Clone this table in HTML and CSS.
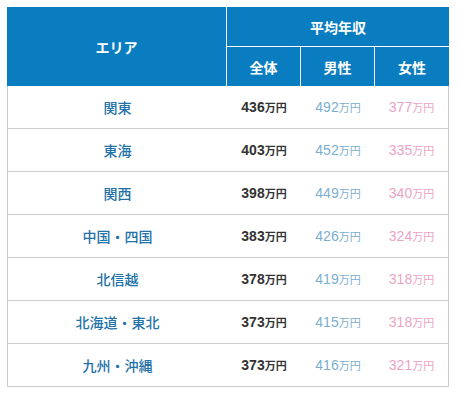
FILE: index.html
```html
<!DOCTYPE html>
<html lang="ja">
<head>
<meta charset="utf-8">
<link rel="stylesheet" href="styles.css">
</head>
<body>
<table class="salary">
  <thead>
    <tr class="head-top">
      <th class="area-head" rowspan="2">エリア</th>
      <th class="group-head" colspan="3">平均年収</th>
    </tr>
    <tr class="head-sub">
      <th class="sub">全体</th>
      <th class="sub">男性</th>
      <th class="sub last">女性</th>
    </tr>
  </thead>
  <tbody>
    <tr><td class="area">関東</td><td class="all">436<span class="unit">万円</span></td><td class="male">492<span class="unit">万円</span></td><td class="female">377<span class="unit">万円</span></td></tr>
    <tr><td class="area">東海</td><td class="all">403<span class="unit">万円</span></td><td class="male">452<span class="unit">万円</span></td><td class="female">335<span class="unit">万円</span></td></tr>
    <tr><td class="area">関西</td><td class="all">398<span class="unit">万円</span></td><td class="male">449<span class="unit">万円</span></td><td class="female">340<span class="unit">万円</span></td></tr>
    <tr><td class="area">中国・四国</td><td class="all">383<span class="unit">万円</span></td><td class="male">426<span class="unit">万円</span></td><td class="female">324<span class="unit">万円</span></td></tr>
    <tr><td class="area">北信越</td><td class="all">378<span class="unit">万円</span></td><td class="male">419<span class="unit">万円</span></td><td class="female">318<span class="unit">万円</span></td></tr>
    <tr><td class="area">北海道・東北</td><td class="all">373<span class="unit">万円</span></td><td class="male">415<span class="unit">万円</span></td><td class="female">318<span class="unit">万円</span></td></tr>
    <tr><td class="area">九州・沖縄</td><td class="all">373<span class="unit">万円</span></td><td class="male">416<span class="unit">万円</span></td><td class="female">321<span class="unit">万円</span></td></tr>
  </tbody>
</table>
</body>
</html>
```

FILE: styles.css
```css
html, body {
  margin: 0;
  padding: 0;
  background: #ffffff;
}
body {
  padding: 7px;
  font-family: "Liberation Sans", "Noto Sans CJK JP", sans-serif;
}
.salary {
  width: 442px;
  border-collapse: separate;
  border-spacing: 0;
  table-layout: fixed;
}
.salary th {
  background: #0a7dc1;
  color: #ffffff;
  font-family: "Noto Sans CJK JP", sans-serif;
  font-weight: 700;
  font-size: 14px;
  text-align: center;
  padding: 0;
  line-height: 1;
}
.area-head {
  width: 220px;
  border-right: 1px solid #ffffff;
  box-sizing: border-box;
}
.head-top th.group-head {
  height: 40px;
  border-bottom: 1px solid #ffffff;
  box-sizing: border-box;
}
.head-sub th {
  height: 39px;
  box-sizing: border-box;
}
.head-sub th.sub {
  border-right: 1px solid #ffffff;
}
.head-sub th.last {
  border-right: 0;
}
.salary td {
  height: 43px;
  box-sizing: border-box;
  border-bottom: 1px solid #cccccc;
  text-align: center;
  padding: 0;
  font-size: 14px;
  line-height: 1;
}
.salary td.area {
  border-left: 1px solid #cccccc;
  color: #2271a8;
  font-family: "Noto Sans CJK JP", sans-serif;
  font-weight: 500;
}
.salary td.female {
  border-right: 1px solid #cccccc;
}
.all {
  color: #333333;
  font-weight: 700;
}
.male {
  color: #7aaed0;
}
.female {
  color: #eba3c4;
}
.unit {
  font-family: "Noto Sans CJK JP", sans-serif;
  font-size: 11px;
}
.all .unit {
  font-weight: 700;
}
```
